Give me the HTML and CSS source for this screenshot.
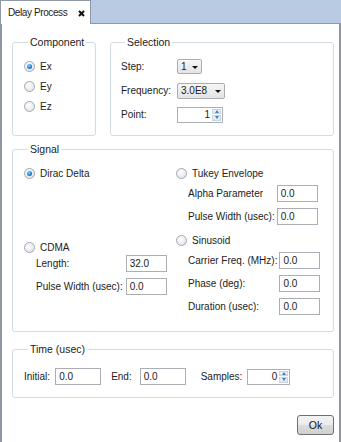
FILE: index.html
```html
<!DOCTYPE html>
<html lang="en">
<head>
  <title>Delay Process</title>
  <meta charset="utf-8">
  <link rel="stylesheet" href="styles.css">
</head>
<body>

  <div class="tabbar">
    <div class="tab">
      <span>Delay Process</span>
      <svg class="close" width="7" height="7" viewBox="0 0 7 7"><path d="M1 1L6 6M6 1L1 6" stroke="#111" stroke-width="2"/></svg>
    </div>
  </div>

  <div class="pane">
    <div class="top-row">
      <fieldset class="group component">
        <legend>Component</legend>
        <label class="radio"><span class="dot checked"></span>Ex</label>
        <label class="radio"><span class="dot"></span>Ey</label>
        <label class="radio"><span class="dot"></span>Ez</label>
      </fieldset>

      <fieldset class="group selection">
        <legend>Selection</legend>
        <div class="form">
          <span>Step:</span>
          <div class="combo small">1<span class="arrow"></span></div>
          <span>Frequency:</span>
          <div class="combo">3.0E8<span class="arrow"></span></div>
          <span>Point:</span>
          <div class="spin"><span class="value">1</span><span class="buttons"><i class="up"></i><i class="down"></i></span></div>
        </div>
      </fieldset>
    </div>

    <fieldset class="group signal">
      <legend>Signal</legend>
      <div class="columns">
        <div class="col left">
          <label class="radio"><span class="dot checked"></span>Dirac Delta</label>
          <label class="radio cdma"><span class="dot"></span>CDMA</label>
          <div class="subform">
            <span>Length:</span><div class="field">32.0</div>
            <span>Pulse Width (usec):</span><div class="field">0.0</div>
          </div>
        </div>
        <div class="col right">
          <label class="radio"><span class="dot"></span>Tukey Envelope</label>
          <div class="subform">
            <span>Alpha Parameter</span><div class="field">0.0</div>
            <span>Pulse Width (usec):</span><div class="field">0.0</div>
          </div>
          <label class="radio sinusoid"><span class="dot"></span>Sinusoid</label>
          <div class="subform">
            <span>Carrier Freq. (MHz):</span><div class="field">0.0</div>
            <span>Phase (deg):</span><div class="field">0.0</div>
            <span>Duration (usec):</span><div class="field">0.0</div>
          </div>
        </div>
      </div>
    </fieldset>

    <fieldset class="group time">
      <legend>Time (usec)</legend>
      <div class="time-row">
        <span>Initial:</span><div class="field time-field">0.0</div>
        <span class="end">End:</span><div class="field time-field end-field">0.0</div>
        <span class="samples">Samples:</span>
        <div class="spin short"><span class="value">0</span><span class="buttons"><i class="up"></i><i class="down"></i></span></div>
      </div>
    </fieldset>

    <div class="actions">
      <button class="button">Ok</button>
    </div>
  </div>

</body>
</html>
```

FILE: styles.css
```css
*, *::before, *::after {
  margin: 0;
  padding: 0;
  box-sizing: border-box;
}

body {
  width: 341px;
  height: 442px;
  overflow: hidden;
  font-family: "Liberation Sans", Arial, sans-serif;
  font-size: 10px;
  color: #1b1b1b;
  background: #fff;
}

/* tab strip */

.tabbar {
  height: 24px;
  display: flex;
  background: #b8cbe3;
  border-bottom: 1px solid #8e98a6;
}

.tab {
  width: 91px;
  height: 24px;
  padding: 0 0 0 7px;
  display: flex;
  gap: 11px;
  align-items: center;
  white-space: nowrap;
  letter-spacing: -0.4px;
  background: #fff;
  border: 1px solid #8e98a6;
  border-bottom: none;
}

.close {
  margin-top: 1px;
}

/* main pane */

.pane {
  height: 418px;
  padding: 12px 5px 0 10px;
  border-left: 2px solid #8f96a0;
  border-right: 2px solid #8f96a0;
}

.group {
  border: 1px solid #d3dce4;
  border-radius: 3px;
}

.group legend {
  margin-left: 4px;
  padding: 0 2px;
  line-height: 12px;
  font-size: 10.5px;
}

.top-row {
  display: flex;
  gap: 14px;
}

.component {
  width: 84px;
  height: 100px;
  padding: 11px 0 0 11px;
  display: flex;
  flex-direction: column;
  gap: 6px;
}

.selection {
  flex: 1;
  height: 100px;
  padding: 10px 0 0 10px;
}

.form {
  display: grid;
  grid-template-columns: 56px auto;
  grid-auto-rows: 17px;
  row-gap: 7px;
  align-items: center;
  justify-items: start;
}

/* radios */

.radio {
  height: 14px;
  display: flex;
  align-items: center;
  gap: 5px;
}

.dot {
  width: 11px;
  height: 11px;
  display: grid;
  place-items: center;
  border: 1px solid #a3a9b0;
  border-radius: 50%;
  background: radial-gradient(circle at 40% 35%, #fff 0, #e9ebee 60%, #d0d4d9 100%);
}

.dot.checked::after {
  content: "";
  width: 5px;
  height: 5px;
  border-radius: 50%;
  background: radial-gradient(circle at 40% 35%, #8fd3ff 0, #1f7fcf 55%, #0b4f8f 100%);
}

/* inputs */

.field {
  width: 41px;
  height: 17px;
  padding: 0 3px;
  display: flex;
  align-items: center;
  border: 1px solid #abafb5;
  background: #fff;
}

.combo {
  height: 16px;
  width: 48px;
  padding: 0 3px;
  display: flex;
  align-items: center;
  justify-content: space-between;
  border: 1px solid #a9adb3;
  border-radius: 2px;
  background: linear-gradient(#f6f6f6, #e4e4e4);
}

.combo.small {
  width: 25px;
  height: 15px;
}

.arrow {
  width: 0;
  height: 0;
  border-left: 3px solid transparent;
  border-right: 3px solid transparent;
  border-top: 3px solid #111;
  margin-top: 1px;
}

.spin {
  height: 16px;
  display: flex;
  border: 1px solid #abafb5;
  background: #fff;
}

.spin .value {
  width: 34px;
  padding-right: 2px;
  display: flex;
  align-items: center;
  justify-content: flex-end;
}

.spin.short .value {
  width: 31px;
}

.buttons {
  width: 10px;
  display: flex;
  flex-direction: column;
  gap: 1px;
  padding: 1px 1px 1px 0;
}

.buttons i {
  flex: 1;
  display: grid;
  place-items: center;
  background: linear-gradient(#eef4fa, #d9e6f2);
  border: 1px solid #c8d4e0;
}

.buttons i::after {
  content: "";
  border-left: 2.5px solid transparent;
  border-right: 2.5px solid transparent;
}

.buttons .up::after {
  border-bottom: 3px solid #4a7fb4;
}

.buttons .down::after {
  border-top: 3px solid #4a7fb4;
}

/* signal */

.signal {
  margin-top: 7px;
  height: 189px;
  padding: 11px 0 0 11px;
}

.columns {
  display: grid;
  grid-template-columns: 152px 1fr;
}

.col {
  display: flex;
  flex-direction: column;
}

.subform {
  margin: 1px 0 0 12px;
  display: grid;
  grid-template-columns: auto 41px;
  justify-content: start;
  column-gap: 3px;
  grid-auto-rows: 17px;
  row-gap: 6px;
  align-items: center;
}

.right .subform {
  margin-top: 5px;
  column-gap: 2px;
}

.cdma {
  margin-top: 60px;
}

.right .sinusoid {
  margin-top: 8px;
}

/* time */

.time {
  margin-top: 11px;
  height: 55px;
  padding: 13px 0 0 11px;
}

.time-row {
  display: flex;
  align-items: center;
  gap: 5px;
}

.time-field {
  width: 46px;
}

.end {
  margin-left: 5px;
}

.end-field {
  margin-left: 3px;
}

.samples {
  margin-left: 10px;
}

/* buttons */

.actions {
  margin-top: 17px;
  display: flex;
  justify-content: flex-end;
}

.button {
  width: 37px;
  height: 20px;
  font-family: inherit;
  font-size: 10.5px;
  color: #111;
  border: 1px solid #707070;
  border-radius: 3px;
  background: linear-gradient(#f2f2f2 0, #ebebeb 50%, #dddddd 51%, #cfcfcf 100%);
}
```
